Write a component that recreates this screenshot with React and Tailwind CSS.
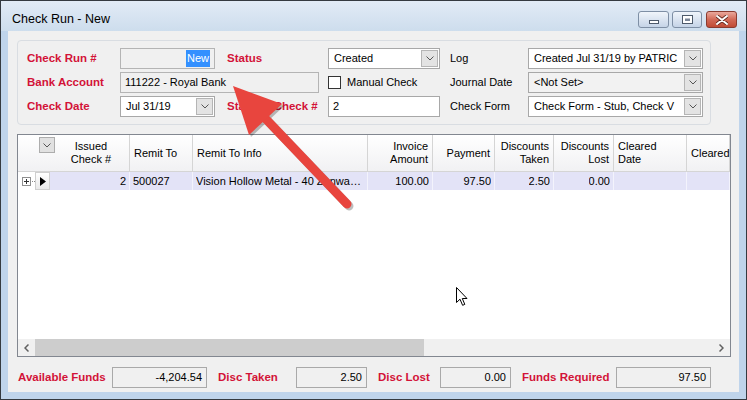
import React from "react";

/* -------- small pieces -------- */
const Chevron = () => (
  <svg width="8" height="5" viewBox="0 0 8 5">
    <polyline points="0.5,0.5 4,4 7.5,0.5" fill="none" stroke="#555" strokeWidth="1" />
  </svg>
);

function Label({ children, w }) {
  return (
    <div className={`shrink-0 font-bold text-[11.5px] text-[#d31338] ${w}`}>{children}</div>
  );
}

function Combo({ value, w, gray }) {
  return (
    <div
      className={`flex h-[21px] shrink-0 items-center border border-[#a8a8a8] ${
        gray ? "bg-[#f2f2f2]" : "bg-white"
      } ${w}`}
    >
      <span className="flex-1 overflow-hidden whitespace-nowrap pl-[5px] text-[11px]">{value}</span>
      <span className="mr-[1px] flex h-[17px] w-[17px] shrink-0 items-center justify-center border border-[#b5b5b5] bg-[#e3e3e3]">
        <Chevron />
      </span>
    </div>
  );
}

function TextBox({ children, w, disabled, right }) {
  return (
    <div
      className={`flex h-[21px] shrink-0 items-center border px-[4px] text-[11px] ${
        disabled ? "border-[#b4b4b4] bg-[#f0f0f0]" : "border-[#a8a8a8] bg-white"
      } ${right ? "justify-end" : ""} ${w}`}
    >
      {children}
    </div>
  );
}

function SumBox({ children, w }) {
  return (
    <div className={`flex h-[21px] shrink-0 items-center justify-end border border-[#a9a9a9] bg-[#f0f0f0] pr-[4px] text-[11px] ${w}`}>
      {children}
    </div>
  );
}

const headers = [
  { w: "w-[63px]", t: "Remit To", a: "justify-start" },
  { w: "w-[175px]", t: "Remit To Info", a: "justify-start" },
  { w: "w-[65px]", t: "Invoice\nAmount", a: "justify-end text-right" },
  { w: "w-[62px]", t: "Payment", a: "justify-end text-right" },
  { w: "w-[59px]", t: "Discounts\nTaken", a: "justify-end text-right" },
  { w: "w-[60px]", t: "Discounts\nLost", a: "justify-end text-right" },
  { w: "w-[73px]", t: "Cleared\nDate", a: "justify-start" },
  { w: "w-[43px]", t: "Cleared", a: "justify-start" },
];

const row = [
  { w: "w-[63px]", t: "500027", a: "justify-start" },
  { w: "w-[175px]", t: "Vision Hollow Metal - 40 Zenway Blvd", a: "justify-start" },
  { w: "w-[65px]", t: "100.00", a: "justify-end" },
  { w: "w-[62px]", t: "97.50", a: "justify-end" },
  { w: "w-[59px]", t: "2.50", a: "justify-end" },
  { w: "w-[60px]", t: "0.00", a: "justify-end" },
  { w: "w-[73px]", t: "", a: "justify-start" },
  { w: "w-[43px]", t: "", a: "justify-start" },
];

/* -------- Component -------- */
export default function App() {
  return (
    <div className="relative h-[400px] w-[747px] overflow-hidden border border-[#353a40] bg-[#bfd4eb] font-['Liberation_Sans',Arial,sans-serif] text-black">
      {/* TITLE BAR */}
      <div className="flex h-[30px] items-start bg-gradient-to-b from-[#e2ebf6] to-[#cddded]">
        <div className="pl-[11px] pt-[12px] text-[12.5px] leading-none text-black">Check Run - New</div>
        <div className="ml-auto mr-[9px] mt-[10px] flex gap-[3px]">
          <div className="flex h-[17px] w-[31px] items-end justify-center rounded-[3px] border border-[#7e8fa5] bg-gradient-to-b from-[#f0f5fb] to-[#c5d4e7] pb-[3px]">
            <svg width="10" height="4"><rect x="0.5" y="0.5" width="9" height="3" fill="#fff" stroke="#4d5a6b" /></svg>
          </div>
          <div className="flex h-[17px] w-[30px] items-center justify-center rounded-[3px] border border-[#7e8fa5] bg-gradient-to-b from-[#f0f5fb] to-[#c5d4e7]">
            <svg width="11" height="9"><rect x="0.5" y="0.5" width="10" height="8" fill="#fff" stroke="#4d5a6b" /><rect x="3" y="3.5" width="5" height="2.5" fill="#7a8698" /></svg>
          </div>
          <div className="ml-[1px] flex h-[17px] w-[31px] items-center justify-center rounded-[3px] border border-[#8a3b30] bg-gradient-to-b from-[#e9a89c] via-[#d26a58] to-[#c04b35]">
            <svg width="12" height="10" viewBox="0 0 12 10">
              <path d="M1 1 L11 9 M11 1 L1 9" stroke="#5a2219" strokeWidth="3.6" strokeLinecap="round" />
              <path d="M1 1 L11 9 M11 1 L1 9" stroke="#fff" strokeWidth="2" strokeLinecap="round" />
            </svg>
          </div>
        </div>
      </div>

      {/* CLIENT AREA */}
      <div className="mx-[7px] flex h-[361px] flex-col bg-[#f0f0f0] pl-[9px] pr-[8px] pt-[9px]">
        {/* HEADER GROUP */}
        <div className="flex w-[694px] flex-col gap-[3px] rounded-[4px] border border-[#d9dde2] pb-[7px] pl-[9px] pt-[7px]">
          <div className="flex items-center">
            <Label w="w-[93px]">Check Run #</Label>
            <TextBox w="w-[95px]" disabled right>
              <span className="bg-[#3390ff] px-[1px] text-white">New</span>
            </TextBox>
            <div className="ml-[12px]" />
            <Label w="w-[101px]">Status</Label>
            <Combo w="w-[112px]" value="Created" />
            <div className="ml-[10px] w-[78px] text-[11px]">Log</div>
            <Combo w="w-[175px]" value="Created Jul 31/19 by PATRIC" />
          </div>
          <div className="flex items-center">
            <Label w="w-[93px]">Bank Account</Label>
            <TextBox w="w-[199px]" disabled>111222 - Royal Bank</TextBox>
            <div className="ml-[9px] flex w-[112px] items-center">
              <span className="h-[13px] w-[13px] border border-[#333] bg-white" />
              <span className="ml-[6px] text-[11px]">Manual Check</span>
            </div>
            <div className="ml-[10px] w-[78px] text-[11px]">Journal Date</div>
            <Combo w="w-[175px]" value="<Not Set>" gray />
          </div>
          <div className="flex items-center">
            <Label w="w-[93px]">Check Date</Label>
            <Combo w="w-[95px]" value="Jul 31/19" />
            <div className="ml-[12px]" />
            <Label w="w-[101px]">Starting Check #</Label>
            <TextBox w="w-[112px]">2</TextBox>
            <div className="ml-[10px] w-[78px] text-[11px]">Check Form</div>
            <Combo w="w-[175px]" value="Check Form - Stub, Check V" />
          </div>
        </div>

        {/* GRID */}
        <div className="mt-[9px] flex h-[223px] w-[714px] flex-col overflow-hidden border border-[#828790] bg-white text-[11px]">
          {/* column headers */}
          <div className="flex h-[37px] shrink-0 border-b border-[#d5d5d5] bg-gradient-to-b from-white to-[#f1f1f3]">
            <div className="flex w-[112px] shrink-0 items-center border-r border-[#d5d5d5]">
              <span className="ml-[21px] mt-[2px] flex h-[16px] w-[16px] items-center justify-center self-start border border-[#adadad] bg-[#e1e1e1]">
                <Chevron />
              </span>
              <span className="flex-1 pr-[2px] text-center leading-[13px]">
                Issued<br />Check #
              </span>
            </div>
            {headers.map((h) => (
              <div
                key={h.t}
                className={`flex shrink-0 items-center whitespace-pre border-r border-[#d5d5d5] px-[4px] leading-[13px] ${h.w} ${h.a}`}
              >
                {h.t}
              </div>
            ))}
          </div>

          {/* data row */}
          <div className="flex h-[18px] shrink-0">
            <div className="flex w-[17px] shrink-0 items-center pl-[4px]">
              <span className="flex h-[9px] w-[9px] items-center justify-center border border-[#8f8f8f] bg-white">
                <svg width="5" height="5"><path d="M0 2.5 H5 M2.5 0 V5" stroke="#333" strokeWidth="1" /></svg>
              </span>
              <span className="ml-[1px] w-[3px] border-t border-dotted border-[#888]" />
            </div>
            <div className="flex w-[15px] shrink-0 items-center justify-center border border-[#cfcfcf] bg-gradient-to-b from-white to-[#e9e9e9]">
              <svg width="6" height="9"><path d="M0 0 L6 4.5 L0 9 Z" fill="#000" /></svg>
            </div>
            <div className="flex flex-1 bg-[#e3e3f7]">
              <div className="flex w-[80px] shrink-0 items-center justify-end border-r border-[#f3f3fc] pr-[3px]">2</div>
              {row.map((c, i) => (
                <div
                  key={i}
                  className={`flex shrink-0 items-center overflow-hidden border-r border-[#f3f3fc] px-[3px] ${c.w} ${c.a}`}
                >
                  <span className="truncate">{c.t}</span>
                </div>
              ))}
            </div>
          </div>

          <div className="flex-1" />

          {/* horizontal scrollbar */}
          <div className="flex h-[17px] shrink-0 items-center bg-[#f0f0f0]">
            <div className="flex w-[17px] shrink-0 items-center justify-center">
              <svg width="5" height="8"><polyline points="4.5,0.5 1,4 4.5,7.5" fill="none" stroke="#606060" strokeWidth="1.5" /></svg>
            </div>
            <div className="h-[17px] w-[389px] bg-[#cdcdcd]" />
            <div className="flex-1" />
            <div className="flex w-[17px] shrink-0 items-center justify-center">
              <svg width="5" height="8"><polyline points="0.5,0.5 4,4 0.5,7.5" fill="none" stroke="#606060" strokeWidth="1.5" /></svg>
            </div>
          </div>
        </div>

        {/* TOTALS */}
        <div className="ml-[1px] mt-[10px] flex items-center">
          <Label w="w-[94px]">Available Funds</Label>
          <SumBox w="w-[95px]">-4,204.54</SumBox>
          <div className="ml-[11px]" />
          <Label w="w-[78px]">Disc Taken</Label>
          <SumBox w="w-[71px]">2.50</SumBox>
          <div className="ml-[11px]" />
          <Label w="w-[62px]">Disc Lost</Label>
          <SumBox w="w-[71px]">0.00</SumBox>
          <div className="ml-[11px]" />
          <Label w="w-[94px]">Funds Required</Label>
          <SumBox w="w-[95px]">97.50</SumBox>
        </div>
      </div>

      {/* red callout arrow (overlay) */}
      <svg className="pointer-events-none absolute left-0 top-0" width="747" height="400">
        <g transform="translate(2,2)" opacity="0.25">
          <line x1="262" y1="115" x2="346" y2="203" stroke="#000" strokeWidth="9" strokeLinecap="round" />
          <polygon points="232,85 281,103 248,134" fill="#000" />
        </g>
        <line x1="262" y1="115" x2="346" y2="203" stroke="#e8453e" strokeWidth="9" strokeLinecap="round" />
        <polygon points="232,85 281,103 248,134" fill="#e8453e" />
      </svg>

      {/* mouse cursor */}
      <svg className="pointer-events-none absolute left-[455px] top-[286px]" width="13" height="20" viewBox="0 0 13 20">
        <path d="M0.5 0.5 L0.5 15.5 L4 12.2 L6.6 18.3 L8.8 17.4 L6.3 11.5 L11 11.5 Z" fill="#fff" stroke="#000" strokeWidth="1" strokeLinejoin="round" />
      </svg>
    </div>
  );
}
